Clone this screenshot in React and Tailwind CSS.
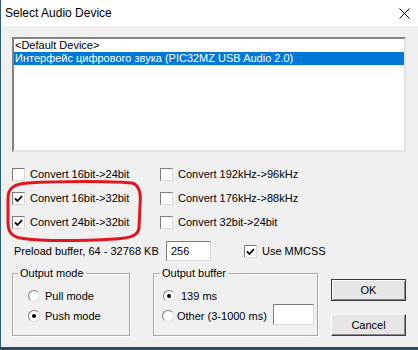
import React from 'react';

const font = "font-['Liberation_Sans',Arial,sans-serif]";

function CheckBox({ checked }) {
  return (
    <span className="w-[13px] h-[13px] shrink-0 bg-white border border-t-[#7a7a7a] border-l-[#7a7a7a] border-r-[#d8d8d8] border-b-[#d8d8d8] flex items-center justify-center">
      {checked && (
        <svg width="9" height="9" viewBox="0 0 9 9">
          <path d="M1 4.5 L3.5 7 L8 2" fill="none" stroke="#000" strokeWidth="1.8" />
        </svg>
      )}
    </span>
  );
}

function Radio({ on }) {
  return (
    <span className="w-[12px] h-[12px] shrink-0 rounded-full bg-white border border-t-[#7a7a7a] border-l-[#7a7a7a] border-r-[#e0e0e0] border-b-[#e0e0e0] flex items-center justify-center">
      {on && <span className="w-[4px] h-[4px] rounded-full bg-black" />}
    </span>
  );
}

function Check({ label, checked }) {
  return (
    <div className="h-[24px] flex items-center gap-[5px]">
      <CheckBox checked={checked} />
      <span>{label}</span>
    </div>
  );
}

export default function App() {
  return (
    <div className={`w-[418px] h-[350px] relative overflow-hidden bg-[#2a4a5e] text-[11px] text-black ${font}`}>
      <div className="h-[347px] border-l border-[#2b5f7d] bg-[#f0f0f0] flex flex-col">
        {/* title bar */}
        <div className="h-[26px] bg-white flex items-center justify-between pl-[4px] pr-[8px] text-[12px]">
          <span>Select Audio Device</span>
          <svg width="11" height="11" viewBox="0 0 11 11">
            <path d="M0.5 0.5 L10.5 10.5 M10.5 0.5 L0.5 10.5" stroke="#000" strokeWidth="1" />
          </svg>
        </div>

        <div className="px-[11px]">
          {/* list box */}
          <div className="mt-[11px] h-[115px] w-[394px] bg-white border-2 border-t-[#828282] border-l-[#828282] border-r-[#e3e3e3] border-b-[#e3e3e3] leading-[13px]">
            <div className="px-[1px]">&lt;Default Device&gt;</div>
            <div className="px-[1px] bg-[#0078d7] text-white">
              Интерфейс цифрового звука (PIC32MZ USB Audio 2.0)
            </div>
          </div>

          {/* options */}
          <div className="mt-[10px] grid grid-cols-[148px_1fr]">
            <Check label="Convert 16bit->24bit" />
            <Check label="Convert 192kHz->96kHz" />
            <Check label="Convert 16bit->32bit" checked />
            <Check label="Convert 176kHz->88kHz" />
            <Check label="Convert 24bit->32bit" checked />
            <Check label="Convert 32bit->24bit" />
          </div>

          <div className="mt-[7px] h-[20px] flex items-center">
            <span className="w-[154px] pl-[2px]">Preload buffer, 64 - 32768 KB</span>
            <div className="w-[45px] h-[20px] bg-white border border-t-[#7a7a7a] border-l-[#7a7a7a] border-r-[#d8d8d8] border-b-[#d8d8d8] flex items-center pl-[4px]">
              256
            </div>
            <div className="ml-[33px] flex items-center gap-[5px]">
              <CheckBox checked />
              <span>Use MMCSS</span>
            </div>
          </div>

          {/* groups + buttons */}
          <div className="mt-[5px] flex items-start">
            <fieldset className="w-[118px] h-[70px] border border-[#a8a8a8] shadow-[inset_1px_1px_0_#ffffff,1px_1px_0_#ffffff]">
              <legend className="ml-[5px] px-[2px] leading-[14px]">Output mode</legend>
              <div className="pt-[6px] pl-[15px]">
                <div className="h-[20px] flex items-center gap-[5px]">
                  <Radio />
                  <span>Pull mode</span>
                </div>
                <div className="h-[20px] flex items-center gap-[5px]">
                  <Radio on />
                  <span>Push mode</span>
                </div>
              </div>
            </fieldset>

            <fieldset className="ml-[23px] w-[165px] h-[70px] border border-[#a8a8a8] shadow-[inset_1px_1px_0_#ffffff,1px_1px_0_#ffffff]">
              <legend className="ml-[6px] px-[2px] leading-[14px]">Output buffer</legend>
              <div className="pt-[6px] pl-[9px]">
                <div className="h-[20px] flex items-center gap-[6px]">
                  <Radio on />
                  <span>139 ms</span>
                </div>
                <div className="h-[20px] flex items-center gap-[3px] -ml-[1px]">
                  <Radio />
                  <span>Other (3-1000 ms)</span>
                  <div className="ml-[3px] -mt-[4px] w-[41px] h-[21px] bg-white border border-t-[#7a7a7a] border-l-[#7a7a7a] border-r-[#d8d8d8] border-b-[#d8d8d8]" />
                </div>
              </div>
            </fieldset>

            <div className="ml-[13px] mt-[13px] flex flex-col gap-[13px]">
              <div className="w-[75px] h-[22px] border border-[#3a3a3a] bg-[#e6e6e6] shadow-[inset_1px_1px_0_#ffffff,inset_-1px_-1px_0_#8a8a8a] flex items-center justify-center">
                OK
              </div>
              <div className="w-[75px] h-[22px] border border-t-[#ffffff] border-l-[#ffffff] border-r-[#404040] border-b-[#404040] bg-[#e6e6e6] shadow-[inset_-1px_-1px_0_#8a8a8a] flex items-center justify-center">
                Cancel
              </div>
            </div>
          </div>
        </div>
      </div>

      {/* red hand-drawn annotation */}
      <svg className="absolute left-0 top-0 pointer-events-none" width="418" height="350">
        <path
          d="M28 183 C60 181, 110 181, 132 183 C140 185, 141 195, 140 205 L139 228 C138 236, 130 238, 115 239 C80 241, 40 241, 20 238 C10 236, 8 230, 8 222 L8 198 C8 188, 14 184, 28 183 Z"
          fill="none"
          stroke="#e3161b"
          strokeWidth="3"
        />
      </svg>
    </div>
  );
}
